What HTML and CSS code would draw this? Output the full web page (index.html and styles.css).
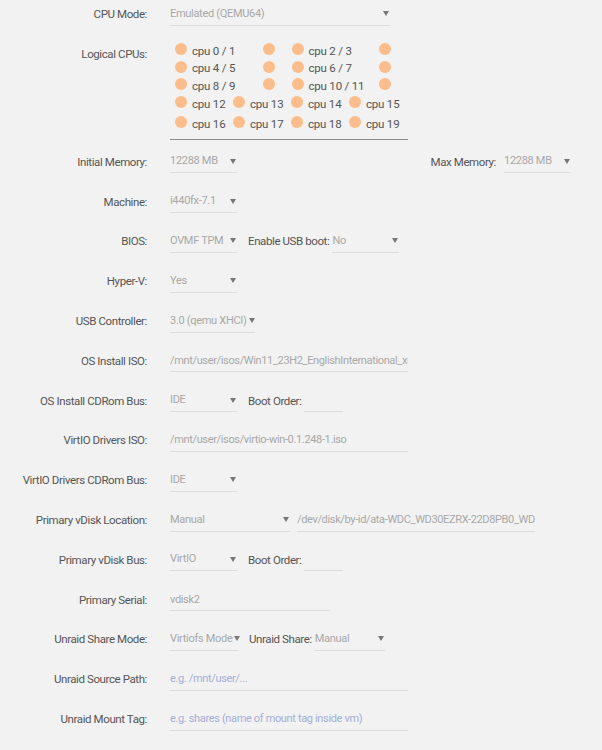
FILE: index.html
```html
<!DOCTYPE html>
<html lang="en">
<head>
    <meta charset="UTF-8">
    <title>VM Settings</title>
    <link rel="stylesheet" href="styles.css">
</head>
<body>
    <div class="form">
        <div class="row first">
            <div class="label">CPU Mode:</div>
            <div class="field"><span class="select w220">Emulated (QEMU64)</span></div>
        </div>

        <div class="row cpus">
            <div class="label">Logical CPUs:</div>
            <div class="field">
                <div class="cpu-box">
                    <div class="cpu-row">
                        <span class="cpu"><i class="dot"></i>cpu 0 / 1</span>
                        <span class="cpu bare"><i class="dot"></i></span>
                        <span class="cpu"><i class="dot"></i>cpu 2 / 3</span>
                        <span class="cpu bare"><i class="dot"></i></span>
                    </div>
                    <div class="cpu-row">
                        <span class="cpu"><i class="dot"></i>cpu 4 / 5</span>
                        <span class="cpu bare"><i class="dot"></i></span>
                        <span class="cpu"><i class="dot"></i>cpu 6 / 7</span>
                        <span class="cpu bare"><i class="dot"></i></span>
                    </div>
                    <div class="cpu-row">
                        <span class="cpu"><i class="dot"></i>cpu 8 / 9</span>
                        <span class="cpu bare"><i class="dot"></i></span>
                        <span class="cpu"><i class="dot"></i>cpu 10 / 11</span>
                        <span class="cpu bare"><i class="dot"></i></span>
                    </div>
                    <div class="cpu-row single">
                        <span class="cpu"><i class="dot"></i>cpu 12</span>
                        <span class="cpu"><i class="dot"></i>cpu 13</span>
                        <span class="cpu"><i class="dot"></i>cpu 14</span>
                        <span class="cpu"><i class="dot"></i>cpu 15</span>
                    </div>
                    <div class="cpu-row single">
                        <span class="cpu"><i class="dot"></i>cpu 16</span>
                        <span class="cpu"><i class="dot"></i>cpu 17</span>
                        <span class="cpu"><i class="dot"></i>cpu 18</span>
                        <span class="cpu"><i class="dot"></i>cpu 19</span>
                    </div>
                </div>
            </div>
        </div>

        <div class="row">
            <div class="label">Initial Memory:</div>
            <div class="field">
                <span class="select">12288 MB</span>
                <span class="right-group">
                    <span class="inline-label">Max Memory:</span>
                    <span class="select">12288 MB</span>
                </span>
            </div>
        </div>

        <div class="row">
            <div class="label">Machine:</div>
            <div class="field"><span class="select">i440fx-7.1</span></div>
        </div>

        <div class="row">
            <div class="label">BIOS:</div>
            <div class="field">
                <span class="select">OVMF TPM</span>
                <span class="inline-label">Enable USB boot:</span>
                <span class="select">No</span>
            </div>
        </div>

        <div class="row">
            <div class="label">Hyper-V:</div>
            <div class="field"><span class="select">Yes</span></div>
        </div>

        <div class="row">
            <div class="label">USB Controller:</div>
            <div class="field"><span class="select w85">3.0 (qemu XHCI)</span></div>
        </div>

        <div class="row">
            <div class="label">OS Install ISO:</div>
            <div class="field"><input class="input" type="text" value="/mnt/user/isos/Win11_23H2_EnglishInternational_x64v2.iso"></div>
        </div>

        <div class="row">
            <div class="label">OS Install CDRom Bus:</div>
            <div class="field">
                <span class="select">IDE</span>
                <span class="inline-label">Boot Order:</span>
                <input class="input w39" type="text" value="">
            </div>
        </div>

        <div class="row">
            <div class="label">VirtIO Drivers ISO:</div>
            <div class="field"><input class="input" type="text" value="/mnt/user/isos/virtio-win-0.1.248-1.iso"></div>
        </div>

        <div class="row">
            <div class="label">VirtIO Drivers CDRom Bus:</div>
            <div class="field"><span class="select">IDE</span></div>
        </div>

        <div class="row">
            <div class="label">Primary vDisk Location:</div>
            <div class="field">
                <span class="select w120">Manual</span>
                <input class="input disk-path" type="text" value="/dev/disk/by-id/ata-WDC_WD30EZRX-22D8PB0_WD-WCC4N1234567">
            </div>
        </div>

        <div class="row">
            <div class="label">Primary vDisk Bus:</div>
            <div class="field">
                <span class="select">VirtIO</span>
                <span class="inline-label">Boot Order:</span>
                <input class="input w39" type="text" value="">
            </div>
        </div>

        <div class="row">
            <div class="label">Primary Serial:</div>
            <div class="field"><input class="input w160" type="text" value="vdisk2"></div>
        </div>

        <div class="row">
            <div class="label">Unraid Share Mode:</div>
            <div class="field">
                <span class="select w68">Virtiofs Mode</span>
                <span class="inline-label">Unraid Share:</span>
                <span class="select w70">Manual</span>
            </div>
        </div>

        <div class="row">
            <div class="label">Unraid Source Path:</div>
            <div class="field"><input class="input" type="text" placeholder="e.g. /mnt/user/..."></div>
        </div>

        <div class="row">
            <div class="label">Unraid Mount Tag:</div>
            <div class="field"><input class="input" type="text" placeholder="e.g. shares (name of mount tag inside vm)"></div>
        </div>
    </div>
</body>
</html>
```

FILE: styles.css
```css
body { margin: 0; background: #f2f2f2; font-family: Roboto, "Liberation Sans", sans-serif; font-size: 11px; color: #555; }

.form { width: 602px; }
.row { display: flex; align-items: center; height: 39.8px; }
.row.first { height: 28px; }
.label { flex: none; width: 147px; margin-right: 23px; text-align: right; font-size: 11.5px; line-height: 16px; letter-spacing: -0.4px; }
.field { flex: 1; display: flex; align-items: center; padding-right: 31px; }

/* dropdowns: value on the left, small arrow on the right */
.select { display: inline-flex; align-items: center; justify-content: space-between; box-sizing: border-box; width: 67px; height: 23px; padding: 3px 0; line-height: 16px; letter-spacing: -0.3px; color: #a8a8a8; border-bottom: 1px solid #dcdcdc; white-space: nowrap; }
.select::after { content: ""; flex: none; margin: 0 1px 0 2px; border-left: 3px solid transparent; border-right: 3px solid transparent; border-top: 5px solid #777; }
.select.w220 { width: 220px; }
.select.w85 { width: 85px; }
.select.w120 { width: 120px; }
.select.w68 { width: 68px; }
.select.w70 { width: 70px; }

.input { box-sizing: border-box; width: 238px; height: 23px; margin: 0; padding: 3px 0; border: 0; border-bottom: 1px solid #dcdcdc; background: transparent; font: inherit; line-height: 16px; letter-spacing: -0.35px; color: #a8a8a8; outline: none; }
.input::placeholder { color: #a3afd8; }
.input.w39 { width: 39px; }
.input.w160 { width: 160px; }
.input.disk-path { margin-left: 7px; }

.inline-label { margin: 0 3px 0 11px; white-space: nowrap; font-size: 11.5px; letter-spacing: -0.4px; }
.right-group { display: flex; align-items: center; margin-left: auto; }
.right-group .inline-label { margin-right: 8px; }

/* cpu pinning box */
.row.cpus { height: 114px; align-items: flex-start; }
.row.cpus .label { margin-top: 18px; }
.cpu-box { box-sizing: border-box; width: 238px; padding: 13.75px 0 4.5px 5px; border-bottom: 1px solid #8c8c8c; }
.cpu-row { display: flex; align-items: center; height: 17.5px; }
.cpu-row.single { height: 20px; }
.cpu { display: flex; align-items: center; width: 89px; white-space: nowrap; color: #555; font-size: 11.5px; letter-spacing: -0.2px; }
.cpu.bare { width: 29px; }
.cpu-row.single .cpu { width: 58px; }
.dot { flex: none; width: 12px; height: 12px; margin: 0 5px 3px 0; border-radius: 50%; background: #fbbd8b; }
.cpu-row.single .dot { margin-bottom: 5px; }
```
